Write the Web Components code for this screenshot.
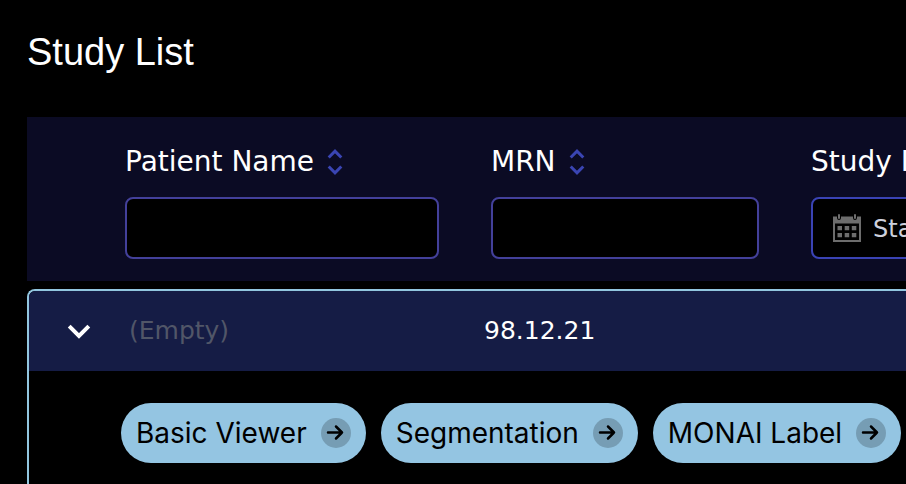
<!DOCTYPE html>
<html lang="en">
<head>
<meta charset="utf-8">
<title>Study List</title>
<style>
  html { background: #000; }
  body { margin: 0; background: #000; color: #fff; font-family: Verdana, "DejaVu Sans", sans-serif; }
</style>
</head>
<body>
<study-page></study-page>

<template id="study-page">
  <style>
    :host { display: flex; flex-direction: column; box-sizing: border-box; min-height: 100vh; padding: 28px 0 0 27px; }
    h1 { margin: 0 0 41px; font: 400 38px/48px Arial, "Liberation Sans", sans-serif; color: #fff; }
    study-table { flex: 1; }
  </style>
  <h1>Study List</h1>
  <study-table></study-table>
</template>

<template id="study-table">
  <style>
    :host { display: flex; flex-direction: column; overflow: hidden; }
    table { display: flex; flex-direction: column; flex: 1; }
    thead, tbody { display: block; }
    tr { display: grid; grid-template-columns: minmax(0, 314fr) minmax(0, 268fr) minmax(0, 95fr); column-gap: 52px; }
    th, td { display: block; padding: 0; text-align: left; font-weight: 400; min-width: 0; }
    thead { background: #0b0b24; padding: 24px 0 22px 98px; margin-bottom: 8px; }
    thead th { overflow: hidden; }
    tbody { flex: 1; border: 2px solid #92c6df; border-width: 2px 0 0 2px; border-top-left-radius: 8px; overflow: hidden; }
    tr.study { grid-template-columns: 96px minmax(0, 359fr) minmax(0, 268fr) minmax(0, 154fr); column-gap: 0; align-items: center; height: 80px; background: #151c45; font-size: 25px; line-height: 32px; }
    tr.study td:nth-child(2) { padding-left: 4px; }
    tr.actions { display: block; }
    tr.actions td { display: flex; gap: 15px; padding: 32px 0 20px 92px; }
    .empty { color: #515668; }
    button.toggle { display: block; margin: 0 0 0 32px; padding: 6px; border: 0; background: none; color: #fff; }
    .toggle svg { display: block; width: 24px; height: 24px; }
  </style>
  <table>
    <thead>
      <tr>
        <th scope="col"><filter-field label="Patient Name" sortable></filter-field></th>
        <th scope="col"><filter-field label="MRN" sortable></filter-field></th>
        <th scope="col"><filter-field label="Study Date" calendar hint="Start Date"></filter-field></th>
      </tr>
    </thead>
    <tbody>
      <tr class="study">
        <td><button class="toggle" aria-label="Collapse study" aria-expanded="true"><svg viewBox="0 0 24 24" fill="none" stroke="currentColor" stroke-width="4"><path d="M2.2 7.2 12 17 21.8 7.2"/></svg></button></td>
        <td class="empty">(Empty)</td>
        <td>98.12.21</td>
        <td></td>
      </tr>
      <tr class="actions">
        <td colspan="4">
          <launch-button>Basic Viewer</launch-button>
          <launch-button>Segmentation</launch-button>
          <launch-button>MONAI Label</launch-button>
        </td>
      </tr>
    </tbody>
  </table>
</template>

<template id="filter-field">
  <style>
    :host { display: block; }
    .head { display: flex; align-items: center; gap: 13px; height: 40px; padding-top: 1px; margin-bottom: 15px; white-space: nowrap; }
    label { font-size: 28px; line-height: 40px; color: #fff; }
    .sort { padding: 0; border: 0; background: none; color: #3a45b3; }
    .sort svg { display: block; width: 16px; height: 28px; }
    .box { position: relative; display: block; }
    input { display: block; box-sizing: border-box; width: 100%; height: 62px; margin: 0; padding: 2px 16px 0; border: 2px solid #43409a; border-radius: 8px; background: #000; color: #fff; font: 24px "DejaVu Sans", sans-serif; outline: 0; }
    input::placeholder { color: #cdd0dc; opacity: 1; }
    .box > svg { display: none; position: absolute; left: 22px; top: 16px; width: 28px; height: 30px; color: #6d6d6d; }
    :host([calendar]) .box { width: 268px; }
    :host([calendar]) .box > svg { display: block; }
    :host([calendar]) input { padding-left: 60px; border-color: #3a43b4; }
    :host(:not([sortable])) .sort { display: none; }
  </style>
  <div class="head">
    <label for="filter"></label>
    <button class="sort" aria-label="Sort"><svg viewBox="0 0 16 28" fill="none" stroke="currentColor" stroke-width="3"><path d="M1.7 9.5 8 3.2l6.3 6.3M1.7 18.5 8 24.8l6.3-6.3"/></svg></button>
  </div>
  <div class="box">
    <input id="filter" type="text">
    <svg viewBox="0 0 28 30" aria-hidden="true">
      <path fill="currentColor" fill-rule="evenodd" d="M0 3.5H28V29H0ZM2 10.5V27H26V10.5Z"/>
      <path fill="currentColor" d="M4.5 13H9v4.3H4.5zM11.7 13h4.5v4.3h-4.5zM18.8 13h4.5v4.3h-4.5zM4.5 20H9v4.3H4.5zM11.7 20h4.5v4.3h-4.5zM18.8 20h4.5v4.3h-4.5z"/>
      <path fill="none" stroke="#000" stroke-width="4" stroke-linecap="round" d="M6 2v3M22 2v3"/>
      <path fill="none" stroke="currentColor" stroke-width="2" stroke-linecap="round" d="M6 2v3M22 2v3"/>
    </svg>
  </div>
</template>

<template id="launch-button">
  <style>
    :host { display: block; flex: none; }
    button { display: flex; align-items: center; gap: 14px; height: 60px; padding: 0 15px; border: 0; border-radius: 30px; background: #94c5e2; color: #000; font: 400 28px/40px Inter, sans-serif; white-space: nowrap; }
    svg { display: block; flex: none; width: 30px; height: 30px; }
  </style>
  <button><span><slot></slot></span><svg viewBox="0 0 30 30" aria-hidden="true"><circle cx="15" cy="15" r="15" fill="#769db4"/><path d="M7 14.5H21M15 8.5l6 6-6 6" fill="none" stroke="#000" stroke-width="2.5" stroke-linecap="round" stroke-linejoin="round"/></svg></button>
</template>

<script>
  class TemplateElement extends HTMLElement {
    constructor() {
      super();
      const template = document.getElementById(this.localName);
      this.attachShadow({ mode: "open" }).append(template.content.cloneNode(true));
    }
  }

  class FilterField extends TemplateElement {
    connectedCallback() {
      const name = this.getAttribute("label");
      this.shadowRoot.querySelector("label").textContent = name;
      this.shadowRoot.querySelector(".sort").setAttribute("aria-label", "Sort by " + name);
      this.shadowRoot.querySelector("input").placeholder = this.getAttribute("hint") || "";
    }
  }

  customElements.define("launch-button", class extends TemplateElement {});
  customElements.define("filter-field", FilterField);
  customElements.define("study-table", class extends TemplateElement {});
  customElements.define("study-page", class extends TemplateElement {});
</script>
</body>
</html>
